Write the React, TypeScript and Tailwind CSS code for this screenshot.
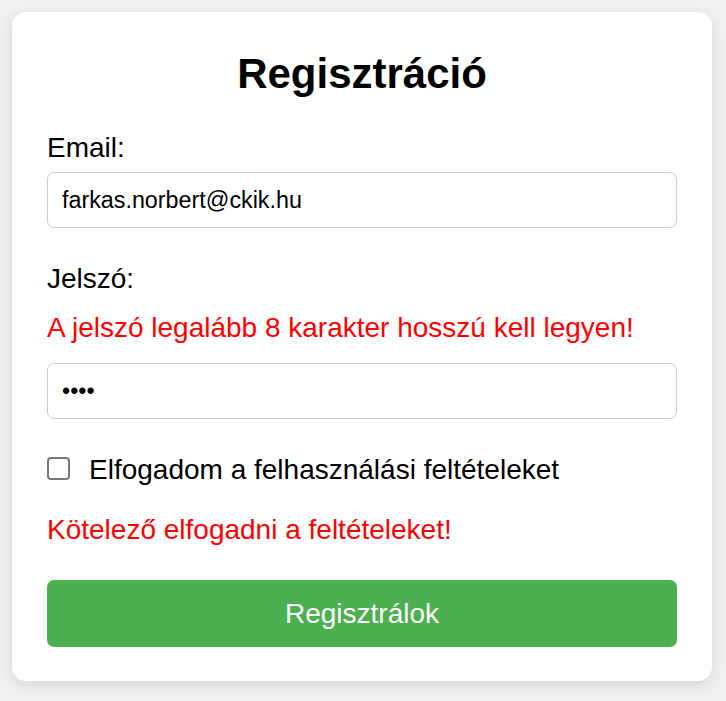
import React, { useState } from 'react';

const App: React.FC = () => {
  const [email, setEmail] = useState('farkas.norbert@ckik.hu');
  const [password, setPassword] = useState('1234');
  const [accepted, setAccepted] = useState(false);

  return (
    <div className="min-h-screen bg-[#f0f0f0] pt-[12px] pl-[12px] flex justify-start font-['Liberation_Sans',Arial,sans-serif] text-black">
      <div className="w-[700px] h-[669px] bg-white rounded-[14px] shadow-[0_4px_14px_rgba(0,0,0,0.1)] px-[35px] pt-[35px] flex flex-col">
        <h2 className="mt-[3px] text-[42px] leading-[48px] font-bold text-center">Regisztráció</h2>

        {/* Email */}
        <label className="mt-[34px] text-[28px] leading-[32px]">Email:</label>
        <input
          type="email"
          value={email}
          onChange={(e) => setEmail(e.target.value)}
          className="mt-[8px] h-[56px] w-full border border-[#cccccc] rounded-[7px] px-[14px] text-[23.3px] outline-none"
        />

        {/* Jelszó */}
        <label className="mt-[35px] text-[28px] leading-[32px]">Jelszó:</label>
        <p className="mt-[17px] text-[28px] leading-[32px] text-[#ff0000]">A jelszó legalább 8 karakter hosszú kell legyen!</p>
        <input
          type="password"
          value={password}
          onChange={(e) => setPassword(e.target.value)}
          className="mt-[19px] h-[56px] w-full border border-[#cccccc] rounded-[7px] px-[14px] text-[23.3px] outline-none"
        />

        {/* Feltételek */}
        <label className="mt-[35px] flex items-center gap-[19px] text-[28px] leading-[32px] cursor-pointer">
          <input
            type="checkbox"
            checked={accepted}
            onChange={(e) => setAccepted(e.target.checked)}
            className="appearance-none shrink-0 w-[23px] h-[23px] border-2 border-[#767676] rounded-[4px] bg-white -mt-[3px] checked:bg-[#0075ff] checked:border-[#0075ff]"
          />
          <span>Elfogadom a felhasználási feltételeket</span>
        </label>
        <p className="mt-[28px] text-[28px] leading-[32px] text-[#ff0000]">Kötelező elfogadni a feltételeket!</p>

        <button className="mt-[34px] h-[67px] w-full bg-[#4caf50] text-white rounded-[7px] text-[28px] leading-[32px]">
          Regisztrálok
        </button>
      </div>
    </div>
  );
};

export default App;
